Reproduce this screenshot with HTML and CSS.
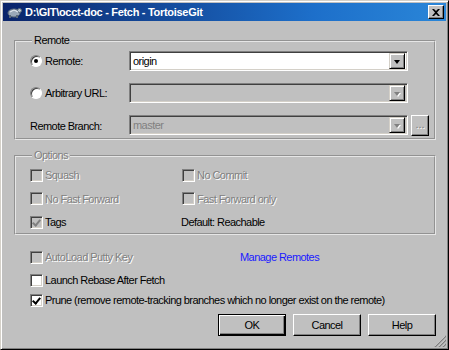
FILE: index.html
```html
<html>
<head>
  <meta charset="UTF-8">
  <title>Fetch - TortoiseGit</title>
  <link rel="stylesheet" href="styles.css">
</head>
<body>

  <div class="ventana">

    <div class="titulo">
      <svg class="icono-app" width="16" height="14" viewBox="0 0 16 14">
        <ellipse cx="8" cy="8" rx="6" ry="4" fill="#9aa8b8" stroke="#5a6878" stroke-width="1"/>
        <circle cx="13.5" cy="5.5" r="2" fill="#b8c4d0" stroke="#5a6878" stroke-width="1"/>
        <rect x="3" y="10" width="2" height="3" fill="#5a6878"/>
        <rect x="10" y="10" width="2" height="3" fill="#5a6878"/>
        <path d="M4 7 L8 5 L12 7" stroke="#eef2f6" stroke-width="1" fill="none"/>
      </svg>
      <span class="titulo-texto">D:\GIT\occt-doc - Fetch - TortoiseGit</span>
      <span class="btn-cerrar">
        <svg width="8" height="7" viewBox="0 0 8 7">
          <path d="M0 0 L2 0 L4 2 L6 0 L8 0 L5 3.5 L8 7 L6 7 L4 5 L2 7 L0 7 L3 3.5 Z" fill="#000"/>
        </svg>
      </span>
    </div>

    <div class="cliente">

      <fieldset class="grupo grupo-remoto">
        <legend>Remote</legend>

        <div class="fila">
          <label class="etiqueta"><span class="radio marcado"></span>Remote:</label>
          <div class="combo">
            <span class="combo-texto">origin</span>
            <span class="combo-flecha"><span class="flecha"></span></span>
          </div>
        </div>

        <div class="fila">
          <label class="etiqueta"><span class="radio"></span>Arbitrary URL:</label>
          <div class="combo combo-off">
            <span class="combo-texto"></span>
            <span class="combo-flecha"><span class="flecha flecha-off"></span></span>
          </div>
        </div>

        <div class="fila">
          <label class="etiqueta etiqueta-sola">Remote Branch:</label>
          <div class="combo combo-off">
            <span class="combo-texto texto-gris">master</span>
            <span class="combo-flecha"><span class="flecha flecha-off"></span></span>
          </div>
          <span class="btn-puntos">...</span>
        </div>
      </fieldset>

      <fieldset class="grupo grupo-opciones">
        <legend class="off">Options</legend>
        <div class="opciones">
          <label class="check-linea off"><span class="check check-off"></span>Squash</label>
          <label class="check-linea off"><span class="check check-off"></span>No Commit</label>
          <label class="check-linea off"><span class="check check-off"></span>No Fast Forward</label>
          <label class="check-linea off"><span class="check check-off"></span>Fast Forward only</label>
          <label class="check-linea"><span class="check check-off marcado"></span>Tags</label>
          <span class="texto-default">Default: Reachable</span>
        </div>
      </fieldset>

      <div class="extras">
        <div class="fila-extra">
          <label class="check-linea off col-izq"><span class="check check-off"></span>AutoLoad Putty Key</label>
          <a class="enlace" href="#">Manage Remotes</a>
        </div>
        <label class="check-linea"><span class="check"></span>Launch Rebase After Fetch</label>
        <label class="check-linea"><span class="check marcado"></span>Prune (remove remote-tracking branches which no longer exist on the remote)</label>
      </div>

      <div class="botones">
        <span class="boton boton-defecto">OK</span>
        <span class="boton">Cancel</span>
        <span class="boton">Help</span>
      </div>

      <svg class="agarre" width="12" height="12" viewBox="0 0 12 12">
        <path d="M11 1 L1 11 M11 5 L5 11 M11 9 L9 11" stroke="#ffffff" stroke-width="1"/>
        <path d="M12 1 L1 12 M12 5 L5 12 M12 9 L9 12" stroke="#808080" stroke-width="1.4"/>
      </svg>
    </div>

  </div>

</body>
</html>
```

FILE: styles.css
```css
body {
  margin: 0;
  background-color: #c0c0c0;
  font-family: 'Liberation Sans', Arial, sans-serif;
  font-size: 11px;
  letter-spacing: -0.55px;
  color: #000;
}

.ventana {
  width: 449px;
  height: 350px;
  box-sizing: border-box;
  border: 1px solid;
  border-color: #d4d0c8 #000 #000 #d4d0c8;
  box-shadow: inset 1px 1px #fff, inset -1px -1px #808080;
  padding: 2px;
  background-color: #c0c0c0;
  display: flex;
  flex-direction: column;
}

/* barra de titulo */
.titulo {
  height: 18px;
  display: flex;
  align-items: center;
  padding: 0 2px 0 3px;
  background: linear-gradient(to right, #0a246a, #1d6fca 70%, #2a86d8);
  color: #fff;
}

.icono-app {
  margin-right: 3px;
}

.titulo-texto {
  font-weight: bold;
  flex: 1;
  letter-spacing: -0.3px;
}

.btn-cerrar {
  width: 14px;
  height: 12px;
  display: flex;
  align-items: center;
  justify-content: center;
  background-color: #c0c0c0;
  border: 1px solid;
  border-color: #fff #000 #000 #fff;
  box-shadow: inset -1px -1px #808080;
}

/* area del cliente */
.cliente {
  flex: 1;
  position: relative;
  padding: 13px 10px 0 11px;
}

.grupo {
  margin: 0;
  border: 2px groove #e6e6e6;
  padding: 4px 0 3px 14px;
  min-width: 0;
}

.grupo legend {
  padding: 0 2px;
  margin-left: 2px;
  line-height: 13px;
}

.off {
  color: #808080;
  text-shadow: 1px 1px #fff;
}

.fila {
  display: flex;
  align-items: center;
  height: 20px;
  margin-bottom: 12px;
}

.fila:last-child {
  margin-bottom: 0;
}

.etiqueta {
  width: 99px;
  display: flex;
  align-items: center;
}

.etiqueta-sola {
  padding-top: 1px;
}

.radio {
  width: 12px;
  height: 12px;
  box-sizing: border-box;
  border-radius: 50%;
  border: 1px solid;
  border-color: #808080 #fff #fff #808080;
  box-shadow: inset 1px 1px #404040;
  background-color: #fff;
  margin-right: 3px;
  display: flex;
  align-items: center;
  justify-content: center;
}

.radio.marcado::after {
  content: '';
  width: 4px;
  height: 4px;
  border-radius: 50%;
  background-color: #000;
}

.combo {
  width: 279px;
  height: 20px;
  box-sizing: border-box;
  border: 1px solid;
  border-color: #808080 #fff #fff #808080;
  box-shadow: inset 1px 1px #404040, inset -1px -1px #d4d0c8;
  background-color: #fff;
  display: flex;
  align-items: center;
  padding: 2px;
}

.combo-off {
  background-color: #c0c0c0;
}

.combo-texto {
  flex: 1;
  padding-left: 1px;
}

.texto-gris {
  color: #808080;
}

.combo-flecha {
  width: 16px;
  height: 16px;
  box-sizing: border-box;
  border: 1px solid;
  border-color: #d4d0c8 #000 #000 #d4d0c8;
  box-shadow: inset 1px 1px #fff, inset -1px -1px #808080;
  background-color: #c0c0c0;
  display: flex;
  align-items: center;
  justify-content: center;
}

.flecha {
  width: 0;
  height: 0;
  border-left: 3px solid transparent;
  border-right: 3px solid transparent;
  border-top: 4px solid #000;
  margin-top: 1px;
}

.flecha-off {
  border-top-color: #808080;
  filter: drop-shadow(1px 1px 0 #fff);
}

.btn-puntos {
  width: 18px;
  height: 21px;
  box-sizing: border-box;
  margin-left: 3px;
  border: 1px solid;
  border-color: #fff #000 #000 #fff;
  box-shadow: inset -1px -1px #808080;
  color: #808080;
  text-shadow: 1px 1px #fff;
  text-align: center;
  line-height: 17px;
  letter-spacing: 0;
}

/* opciones */
.grupo-opciones {
  margin-top: 9px;
  padding-top: 5px;
  padding-bottom: 3px;
}

.opciones {
  display: grid;
  grid-template-columns: 152px 1fr;
  grid-auto-rows: 16px;
  row-gap: 7.5px;
}

.check-linea {
  display: flex;
  align-items: center;
  height: 16px;
}

.check {
  width: 13px;
  height: 13px;
  box-sizing: border-box;
  border: 1px solid;
  border-color: #808080 #fff #fff #808080;
  box-shadow: inset 1px 1px #404040, inset -1px -1px #d4d0c8;
  background-color: #fff;
  margin-right: 2px;
  flex-shrink: 0;
  position: relative;
}

.check-off {
  background-color: #c0c0c0;
}

.check.marcado::after {
  content: '';
  position: absolute;
  left: 2px;
  top: 1px;
  width: 3px;
  height: 6px;
  border-right: 2px solid #000;
  border-bottom: 2px solid #000;
  transform: translate(1px, 0) rotate(40deg);
}

.check-off.marcado::after {
  border-color: #808080;
}

.texto-default {
  display: flex;
  align-items: center;
  margin-left: -1px;
}

/* extras */
.extras {
  padding: 14px 0 0 16px;
  display: flex;
  flex-direction: column;
  gap: 7px;
}

.extras .check-linea:last-child {
  margin-top: -3px;
}

.fila-extra {
  display: flex;
  align-items: center;
}

.col-izq {
  width: 210px;
}

.enlace {
  color: #1a1aff;
  text-decoration: none;
}

/* botones */
.botones {
  display: flex;
  justify-content: flex-end;
  gap: 7px;
  margin-top: 6px;
}

.boton {
  width: 68px;
  height: 22px;
  box-sizing: border-box;
  border: 1px solid;
  border-color: #fff #000 #000 #fff;
  box-shadow: inset -1px -1px #808080;
  display: flex;
  align-items: center;
  justify-content: center;
}

.boton-defecto {
  border: 1px solid #000;
  box-shadow: inset 1px 1px #fff, inset -1px -1px #000, inset -2px -2px #808080;
}

.agarre {
  position: absolute;
  right: 0;
  bottom: 0;
}
```
